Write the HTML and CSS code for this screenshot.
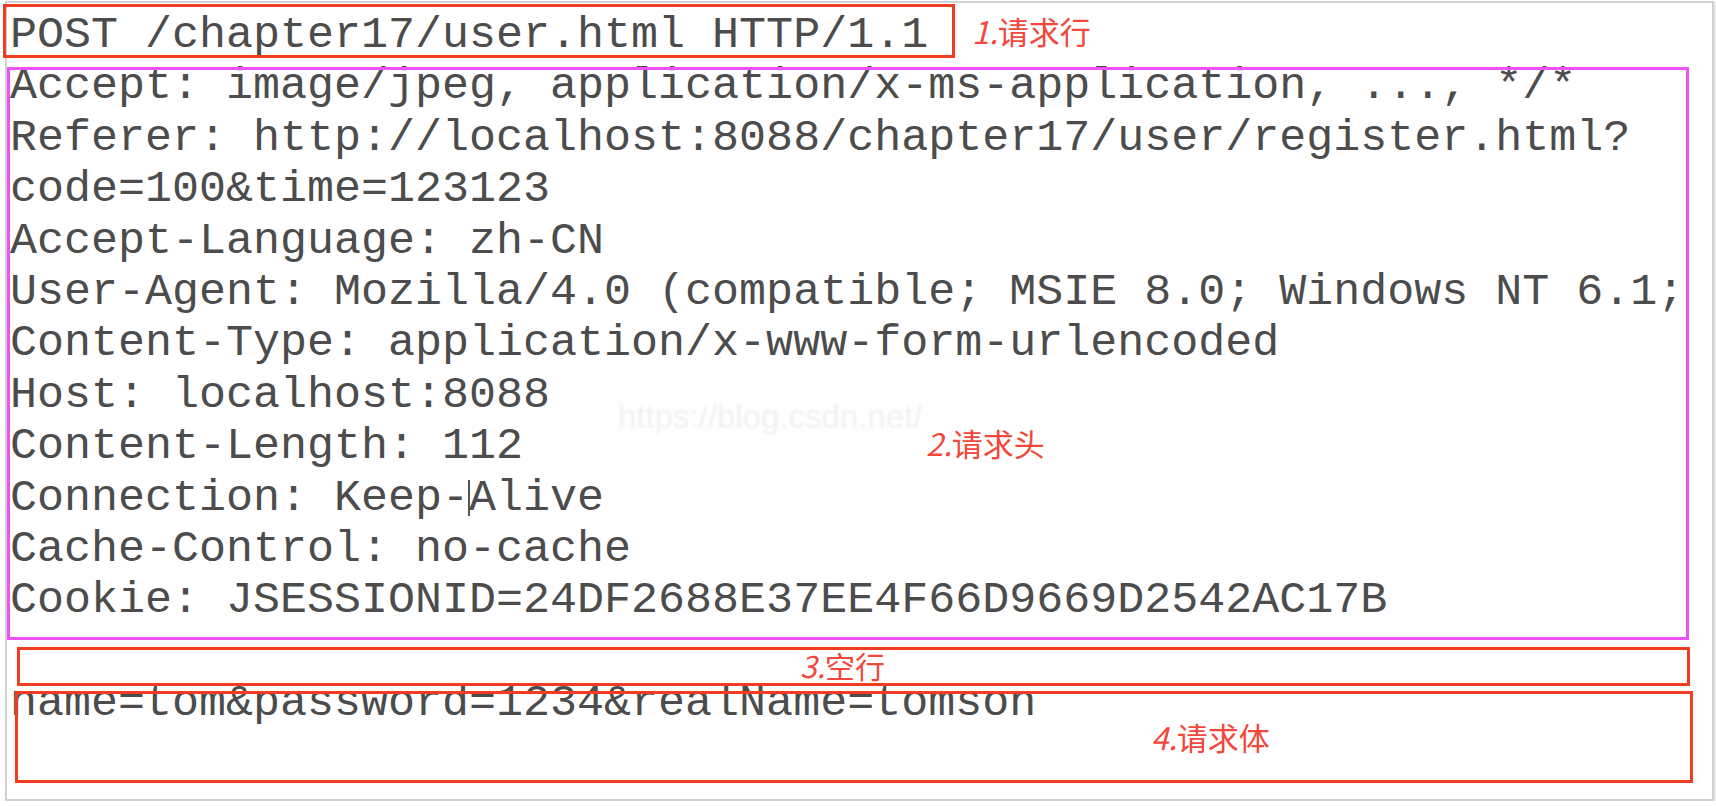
FILE: index.html
```html
<!DOCTYPE html>
<html lang="zh-CN">
<head>
  <meta charset="UTF-8">
  <title>HTTP 请求报文</title>
  <meta name="viewport" content="width=device-width, initial-scale=1.0">
  <link rel="stylesheet" href="styles.css">
</head>
<body>

<div class="frame">
  <pre class="request">POST /chapter17/user.html HTTP/1.1
Accept: image/jpeg, application/x-ms-application, ..., */*
Referer: http://localhost:8088/chapter17/user/register.html?
code=100&amp;time=123123
Accept-Language: zh-CN
User-Agent: Mozilla/4.0 (compatible; MSIE 8.0; Windows NT 6.1;
Content-Type: application/x-www-form-urlencoded
Host: localhost:8088
Content-Length: 112
Connection: Keep-<span class="caret"></span>Alive
Cache-Control: no-cache
Cookie: JSESSIONID=24DF2688E37EE4F66D9669D2542AC17B

name=tom&amp;password=1234&amp;realName=tomson</pre>

  <div class="watermark">https://blog.csdn.net/</div>

  <!-- 标注框 -->
  <div class="box box-line"></div>
  <div class="box box-head"></div>
  <div class="box box-blank"></div>
  <div class="box box-body"></div>

  <span class="tag tag-line"><em>1.</em>请求行</span>
  <span class="tag tag-head"><em>2.</em>请求头</span>
  <span class="tag tag-blank"><em>3.</em>空行</span>
  <span class="tag tag-body"><em>4.</em>请求体</span>
</div>

</body>
</html>
```

FILE: styles.css
```css
body {
  margin: 0;
  background: #fff;
}

.frame {
  position: relative;
  box-sizing: border-box;
  width: 1709px;
  height: 800px;
  margin: 1px 0 0 5px;
  border: 2px solid #d2d2d2;
  box-shadow: 1px 1px 2px rgba(0,0,0,0.15);
  background: #fff;
}

.request {
  margin: 7px 0 0 3px;
  font-family: 'Liberation Mono', monospace;
  font-size: 45px;
  line-height: 51.4px;
  color: #4c4c4c;
}

.caret {
  display: inline-block;
  width: 2px;
  height: 36px;
  margin: 0 -1px;
  vertical-align: -6px;
  background: #555;
}

.watermark {
  position: absolute;
  left: 611px;
  top: 404px;
  font-family: 'Liberation Sans', sans-serif;
  font-size: 33px;
  line-height: 20px;
  color: #f0f0f0;
  filter: blur(1px);
}

.box {
  position: absolute;
  box-sizing: border-box;
  border: 3px solid #f03d20;
}

.box-line {
  left: -4px;
  top: 1px;
  width: 952px;
  height: 54px;
}

.box-head {
  left: 0;
  top: 64px;
  width: 1682px;
  height: 573px;
  border-color: #ec52f6;
}

.box-blank {
  left: 10px;
  top: 644px;
  width: 1673px;
  height: 39px;
}

.box-body {
  left: 8px;
  top: 688px;
  width: 1678px;
  height: 92px;
}

.tag {
  position: absolute;
  font-family: 'Noto Sans CJK SC', sans-serif;
  font-size: 31px;
  line-height: 30px;
  color: #f2473a;
}

.tag em {
  font-style: italic;
}

.tag-line  { left: 965px;  top: 13px; }
.tag-head  { left: 919px;  top: 425px; }
.tag-blank { left: 793px;  top: 647px; font-size: 30px; }
.tag-body  { left: 1144px; top: 719px; }
```
